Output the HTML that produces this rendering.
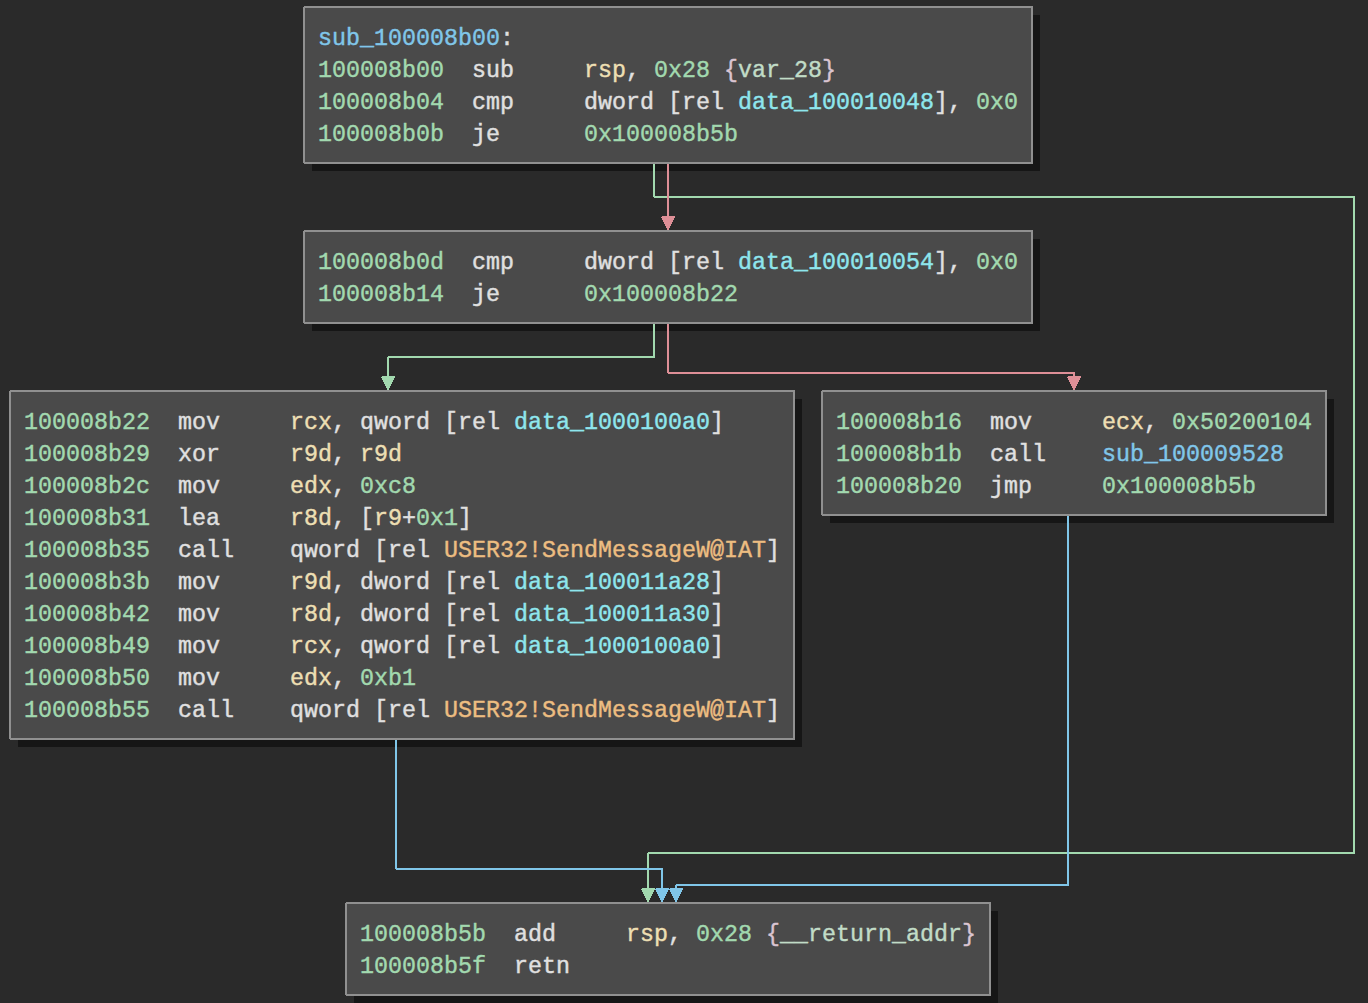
<!DOCTYPE html>
<html><head><meta charset="utf-8"><style>
html,body{margin:0;padding:0;}
body{width:1368px;height:1003px;overflow:hidden;background:#2a2a2a;position:relative;}
.sh{position:absolute;background:#161616;}
.bx::before,.bx::after{content:'';position:absolute;left:-2px;width:1px;height:1px;background:#2a2a2a;}.bx::before{top:-2px;}.bx::after{bottom:-2px;}
.bx{position:absolute;box-sizing:border-box;background:#4a4a4a;border:2px solid #909090;}
.tx{position:absolute;margin:0;font-family:"Liberation Mono",monospace;font-size:23.3333px;line-height:32px;white-space:pre;color:#e0e0e0;-webkit-text-stroke:0.4px currentColor;}
svg{position:absolute;left:0;top:0;}
</style></head><body>
<div class="sh" style="left:312px;top:15px;width:728px;height:156px"></div>
<div class="sh" style="left:312px;top:239px;width:728px;height:92px"></div>
<div class="sh" style="left:18px;top:399px;width:784px;height:348px"></div>
<div class="sh" style="left:830px;top:399px;width:504px;height:124px"></div>
<div class="sh" style="left:354px;top:911px;width:644px;height:92px"></div>
<svg width="1368" height="1003" viewBox="0 0 1368 1003">
<path d="M654,164 V197 H1354 V853 H648 V889" fill="none" stroke="#a2d9af" stroke-width="2" stroke-linejoin="bevel" shape-rendering="crispEdges"/>
<path d="M642,888 H654 L655,889 L648,903 L641,889 Z" fill="#a2d9af" shape-rendering="crispEdges"/>
<path d="M668,164 V217" fill="none" stroke="#de8f97" stroke-width="2" stroke-linejoin="bevel" shape-rendering="crispEdges"/>
<path d="M662,216 H674 L675,217 L668,231 L661,217 Z" fill="#de8f97" shape-rendering="crispEdges"/>
<path d="M654,324 V357 H388 V377" fill="none" stroke="#a2d9af" stroke-width="2" stroke-linejoin="bevel" shape-rendering="crispEdges"/>
<path d="M382,376 H394 L395,377 L388,391 L381,377 Z" fill="#a2d9af" shape-rendering="crispEdges"/>
<path d="M668,324 V373 H1074 V377" fill="none" stroke="#de8f97" stroke-width="2" stroke-linejoin="bevel" shape-rendering="crispEdges"/>
<path d="M1068,376 H1080 L1081,377 L1074,391 L1067,377 Z" fill="#de8f97" shape-rendering="crispEdges"/>
<path d="M396,740 V869 H662 V889" fill="none" stroke="#80c6e9" stroke-width="2" stroke-linejoin="bevel" shape-rendering="crispEdges"/>
<path d="M656,888 H668 L669,889 L662,903 L655,889 Z" fill="#80c6e9" shape-rendering="crispEdges"/>
<path d="M1068,516 V885 H676 V889" fill="none" stroke="#80c6e9" stroke-width="2" stroke-linejoin="bevel" shape-rendering="crispEdges"/>
<path d="M670,888 H682 L683,889 L676,903 L669,889 Z" fill="#80c6e9" shape-rendering="crispEdges"/>
</svg>
<div class="bx" style="left:303px;top:6px;width:730px;height:158px"></div>
<pre class="tx" style="left:318px;top:23px"><span style="color:#80c6e9">sub_100008b00</span>:
<span style="color:#a2d9af">100008b00</span>  sub     <span style="color:#eddfb3">rsp</span>, <span style="color:#a2d9af">0x28</span> <span style="color:#dac4d1">{</span><span style="color:#c1dcc7">var_28</span><span style="color:#dac4d1">}</span>
<span style="color:#a2d9af">100008b04</span>  cmp     dword [rel <span style="color:#8ee6ed">data_100010048</span>], <span style="color:#a2d9af">0x0</span>
<span style="color:#a2d9af">100008b0b</span>  je      <span style="color:#a2d9af">0x100008b5b</span></pre>
<div class="bx" style="left:303px;top:230px;width:730px;height:94px"></div>
<pre class="tx" style="left:318px;top:247px"><span style="color:#a2d9af">100008b0d</span>  cmp     dword [rel <span style="color:#8ee6ed">data_100010054</span>], <span style="color:#a2d9af">0x0</span>
<span style="color:#a2d9af">100008b14</span>  je      <span style="color:#a2d9af">0x100008b22</span></pre>
<div class="bx" style="left:9px;top:390px;width:786px;height:350px"></div>
<pre class="tx" style="left:24px;top:407px"><span style="color:#a2d9af">100008b22</span>  mov     <span style="color:#eddfb3">rcx</span>, qword [rel <span style="color:#8ee6ed">data_1000100a0</span>]
<span style="color:#a2d9af">100008b29</span>  xor     <span style="color:#eddfb3">r9d</span>, <span style="color:#eddfb3">r9d</span>
<span style="color:#a2d9af">100008b2c</span>  mov     <span style="color:#eddfb3">edx</span>, <span style="color:#a2d9af">0xc8</span>
<span style="color:#a2d9af">100008b31</span>  lea     <span style="color:#eddfb3">r8d</span>, [<span style="color:#eddfb3">r9</span>+<span style="color:#a2d9af">0x1</span>]
<span style="color:#a2d9af">100008b35</span>  call    qword [rel <span style="color:#edbd81">USER32!SendMessageW@IAT</span>]
<span style="color:#a2d9af">100008b3b</span>  mov     <span style="color:#eddfb3">r9d</span>, dword [rel <span style="color:#8ee6ed">data_100011a28</span>]
<span style="color:#a2d9af">100008b42</span>  mov     <span style="color:#eddfb3">r8d</span>, dword [rel <span style="color:#8ee6ed">data_100011a30</span>]
<span style="color:#a2d9af">100008b49</span>  mov     <span style="color:#eddfb3">rcx</span>, qword [rel <span style="color:#8ee6ed">data_1000100a0</span>]
<span style="color:#a2d9af">100008b50</span>  mov     <span style="color:#eddfb3">edx</span>, <span style="color:#a2d9af">0xb1</span>
<span style="color:#a2d9af">100008b55</span>  call    qword [rel <span style="color:#edbd81">USER32!SendMessageW@IAT</span>]</pre>
<div class="bx" style="left:821px;top:390px;width:506px;height:126px"></div>
<pre class="tx" style="left:836px;top:407px"><span style="color:#a2d9af">100008b16</span>  mov     <span style="color:#eddfb3">ecx</span>, <span style="color:#a2d9af">0x50200104</span>
<span style="color:#a2d9af">100008b1b</span>  call    <span style="color:#80c6e9">sub_100009528</span>
<span style="color:#a2d9af">100008b20</span>  jmp     <span style="color:#a2d9af">0x100008b5b</span></pre>
<div class="bx" style="left:345px;top:902px;width:646px;height:94px"></div>
<pre class="tx" style="left:360px;top:919px"><span style="color:#a2d9af">100008b5b</span>  add     <span style="color:#eddfb3">rsp</span>, <span style="color:#a2d9af">0x28</span> <span style="color:#dac4d1">{</span><span style="color:#c1dcc7">__return_addr</span><span style="color:#dac4d1">}</span>
<span style="color:#a2d9af">100008b5f</span>  retn</pre>
</body></html>
